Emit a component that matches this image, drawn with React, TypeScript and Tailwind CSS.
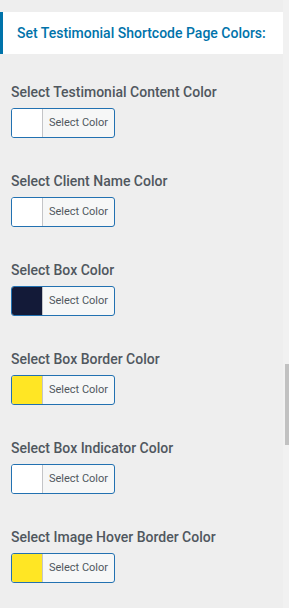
import React from "react";

const fields = [
  { label: "Select Testimonial Content Color", color: "bg-white" },
  { label: "Select Client Name Color", color: "bg-white" },
  { label: "Select Box Color", color: "bg-[#131a38]" },
  { label: "Select Box Border Color", color: "bg-[#ffe624]" },
  { label: "Select Box Indicator Color", color: "bg-white" },
  { label: "Select Image Hover Border Color", color: "bg-[#ffe624]" },
];

const ColorPicker: React.FC<{ color: string }> = ({ color }) => (
  <button className="flex h-[30px] w-[104px] overflow-hidden rounded-[3px] border border-[#2271b1] bg-[#f6f7f7] p-0">
    <span className={`h-full w-[31px] border-r border-[#c3c4c7] ${color}`}></span>
    <span className="flex flex-1 items-center justify-center text-[11px] text-[#50575e]">Select Color</span>
  </button>
);

const App: React.FC = () => {
  return (
    <div className="flex h-[608px] w-[289px] overflow-hidden bg-[#eeeeee] font-['Roboto',sans-serif]">
      <div className="w-[283px] pt-[12px]">
        <div className="flex h-[42px] items-center border-l-[3px] border-[#0073aa] bg-white pl-[14px]">
          <h2 className="whitespace-nowrap text-[14px] font-medium text-[#0073aa]">Set Testimonial Shortcode Page Colors:</h2>
        </div>
        <div className="flex flex-col gap-[34px] pl-[11px] pt-[29px]">
          {fields.map((f) => (
            <div key={f.label} className="flex flex-col gap-[7px]">
              <label className="text-[14px] font-medium leading-[18px] text-[#50575e]">{f.label}</label>
              <ColorPicker color={f.color} />
            </div>
          ))}
        </div>
      </div>
      <div className="flex w-[6px] flex-col bg-[#f1f1f1] pt-[364px]">
        <div className="ml-[2px] h-[81px] w-[4px] bg-[#c1c1c1]"></div>
      </div>
    </div>
  );
};

export default App;
